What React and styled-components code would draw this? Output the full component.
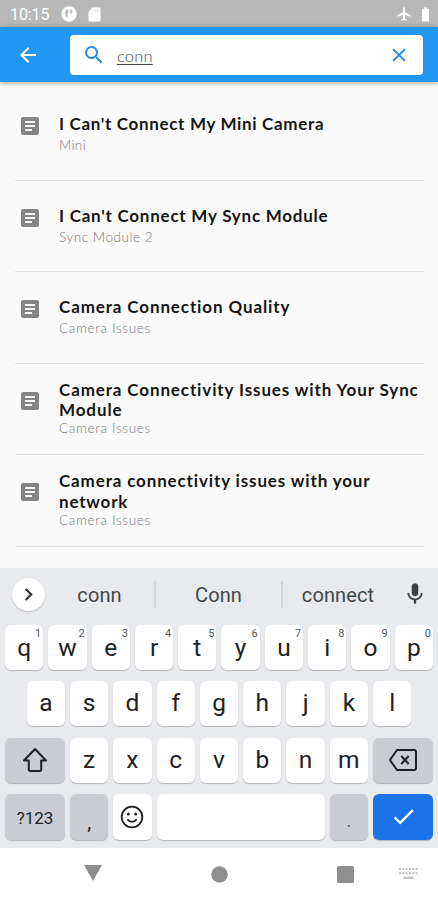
import React from 'react'
import styled, { createGlobalStyle } from 'styled-components'
import {
  MdAirplanemodeActive,
  MdArrowBack,
  MdArticle,
  MdBatteryFull,
  MdCheck,
  MdClose,
  MdKeyboardArrowRight,
  MdMic,
  MdSearch,
} from 'react-icons/md'

const GlobalStyle = createGlobalStyle`
  * {
    box-sizing: border-box;
  }
  body {
    margin: 0;
    background-color: #fff;
  }
`

const Screen = styled.div`
  display: flex;
  flex-direction: column;
  width: 438px;
  height: 900px;
  overflow: hidden;
  background-color: #fafafa;
  font-family: Roboto, sans-serif;
`

const StatusBar = styled.div`
  display: flex;
  align-items: center;
  flex: none;
  height: 27px;
  padding: 1px 4px 0 10px;
  background-color: #b8b8b8;
  color: #fff;
`

const Clock = styled.span`
  width: 51px;
  font-size: 16px;
  letter-spacing: -0.1px;
`

const StatusIcons = styled.div`
  display: flex;
  align-items: center;
  gap: ${({ gap }) => gap}px;
  margin-left: ${({ end }) => end ? 'auto' : 0};
`

const Header = styled.header`
  display: flex;
  align-items: center;
  flex: none;
  height: 55px;
  padding: 0 15px 0 16px;
  background-color: #2196f3;
  color: #fff;
  box-shadow: 0 1px 5px rgba(0, 0, 0, 0.35);
  z-index: 1;
`

const SearchBox = styled.div`
  display: flex;
  align-items: center;
  flex: 1;
  height: 40px;
  margin-left: 30px;
  padding: 0 13px 0 12px;
  border-radius: 4px;
  background-color: #fff;
  color: #2589e6;
`

const Query = styled.span`
  flex: 1;
  margin-left: 11px;
  padding-top: 2px;
  font-family: Lato, sans-serif;
  font-size: 16.5px;
  font-weight: 300;
  line-height: 20px;
  letter-spacing: 0.2px;
  color: #444;
  text-decoration: underline;
  text-decoration-thickness: 1px;
  text-underline-offset: 2px;
`

const Results = styled.ul`
  flex: 1;
  min-height: 0;
  margin: 0;
  padding: 7px 14px 0 15px;
  list-style: none;
`

const Result = styled.li`
  display: flex;
  height: 91.5px;
  border-bottom: 1.5px solid #e3e3e3;
  color: #858585;
  > svg {
    flex: none;
    margin: 25px 17px 0 3px;
  }
`

const ResultText = styled.div`
  padding-top: ${({ twoLines }) => twoLines ? 16 : 25}px;
  white-space: nowrap;
`

const Title = styled.div`
  font-family: Lato, sans-serif;
  font-size: 17px;
  font-weight: 700;
  line-height: 20.5px;
  letter-spacing: ${({ spacing }) => spacing}px;
  color: #161616;
`

const Category = styled.div`
  margin-top: ${({ twoLines }) => twoLines ? -1.5 : 1.5}px;
  font-family: Lato, sans-serif;
  font-size: 13.5px;
  font-weight: 300;
  line-height: 18px;
  letter-spacing: ${({ spacing }) => spacing}px;
  color: #777;
`

const Keyboard = styled.div`
  display: flex;
  flex-direction: column;
  flex: none;
  height: 280px;
  padding: 0 5px;
  background-color: #e8eaed;
  color: #202124;
`

const Suggestions = styled.div`
  display: flex;
  align-items: center;
  flex: none;
  height: 52px;
  margin-bottom: 5px;
  padding: 0 0 0 7px;
  > svg {
    flex: none;
    margin-left: 9px;
  }
`

const ExpandButton = styled.button`
  display: flex;
  align-items: center;
  justify-content: center;
  flex: none;
  width: 33px;
  height: 33px;
  padding: 0;
  border: none;
  border-radius: 50%;
  background-color: #fff;
  color: #303134;
  box-shadow: 0 1px 2px rgba(0, 0, 0, 0.2);
`

const Suggestion = styled.span`
  flex: none;
  width: ${({ width }) => width}px;
  padding-top: 2px;
  font-size: 20px;
  line-height: 25px;
  letter-spacing: 0.1px;
  text-align: center;
  color: #45474a;
  & + & {
    border-left: 2px solid #d5d7da;
  }
`

const KeyRow = styled.div`
  display: flex;
  flex: none;
  gap: 5px;
  height: ${({ height }) => height || 45}px;
  margin-bottom: 11.3px;
  padding: 0 ${({ inset }) => inset || 0}px;
`

const keyColors = {
  letter: '#fff',
  special: '#cbcdd2',
  action: '#1a73e8',
}

const Key = styled.button`
  position: relative;
  display: flex;
  align-items: center;
  justify-content: center;
  flex: ${({ width }) => width ? `0 0 ${width}px` : '1 1 0'};
  min-width: 0;
  padding: ${({ drop }) => drop || 0}px 0 ${({ lift }) => lift || 0}px;
  border: none;
  border-radius: 6px;
  background-color: ${({ kind }) => keyColors[kind || 'letter']};
  box-shadow: 0 1px 1px rgba(0, 0, 0, 0.22);
  font-family: Roboto, sans-serif;
  font-size: ${({ size }) => size || 24.5}px;
  color: ${({ kind, faded }) => kind === 'action' ? '#fff' : faded ? '#6b6d70' : '#202124'};
`

const Hint = styled.span`
  position: absolute;
  top: 3px;
  right: 2px;
  font-size: 11px;
  line-height: 12px;
  color: #55575a;
`

const NavBar = styled.nav`
  display: flex;
  align-items: center;
  flex: none;
  height: 52px;
  padding: 0 20px 0 84px;
  background-color: #fff;
  color: #8e8e8e;
  svg:nth-child(1) {
    margin-top: -3px;
  }
  svg:nth-child(2) {
    margin-left: 109px;
  }
  svg:nth-child(3) {
    margin-left: 109px;
  }
  svg:nth-child(4) {
    margin-left: auto;
  }
`

const results = [
  { title: ["I Can't Connect My Mini Camera"], category: 'Mini', spacing: [0.67], categorySpacing: 0.35 },
  { title: ["I Can't Connect My Sync Module"], category: 'Sync Module 2', spacing: [0.76], categorySpacing: 0.55 },
  { title: ['Camera Connection Quality'], category: 'Camera Issues', spacing: [0.88], categorySpacing: 0.65 },
  { title: ['Camera Connectivity Issues with Your Sync', 'Module'], category: 'Camera Issues', spacing: [0.88, 0.9], categorySpacing: 0.65 },
  { title: ['Camera connectivity issues with your', 'network'], category: 'Camera Issues', spacing: [0.86, 0.8], categorySpacing: 0.65 },
]

const ShiftIcon = () => (
  <svg width="26" height="26" viewBox="0 0 26 26" fill="none" stroke="currentColor" strokeWidth="2" strokeLinejoin="round">
    <path d="M13 2 L24 13.5 H19.2 V22.5 Q19.2 24 17.7 24 H8.3 Q6.8 24 6.8 22.5 V13.5 H2 Z" />
  </svg>
)

const BackspaceIcon = () => (
  <svg width="30" height="24" viewBox="0 0 30 24" fill="none" stroke="currentColor" strokeWidth="2">
    <path d="M9 2 H26 Q28 2 28 4 V20 Q28 22 26 22 H9 L2 12 Z" strokeLinejoin="round" />
    <path d="M13.3 8 L20.7 16 M20.7 8 L13.3 16" />
  </svg>
)

const SmileIcon = () => (
  <svg width="24" height="24" viewBox="0 0 24 24" fill="none" stroke="currentColor" strokeWidth="1.8">
    <circle cx="12" cy="12" r="10.3" />
    <path d="M7.3 14.3 Q12 19.3 16.7 14.3" />
    <circle cx="8.3" cy="9" r="1.5" fill="currentColor" stroke="none" />
    <circle cx="15.7" cy="9" r="1.5" fill="currentColor" stroke="none" />
  </svg>
)

const App = () => (
  <Screen>
    <GlobalStyle />
    <StatusBar>
      <Clock>10:15</Clock>
      <StatusIcons gap={11}>
        <svg width="16" height="16" viewBox="0 0 16 16">
          <circle cx="8" cy="8" r="7.7" fill="#fff" />
          <path d="M7.5 3.6 H5.4 Q3.4 6 4.3 9.5 L6.5 12.2 V7 H7.5 Z" fill="#b8b8b8" />
          <path d="M9.2 3.6 H11 Q12 5.5 11 7.4 H9.2 Z" fill="#b8b8b8" />
        </svg>
        <svg width="13" height="15" viewBox="0 0 13 15" fill="#fff">
          <path d="M4.5 0.5 H11 Q12.5 0.5 12.5 2 V13 Q12.5 14.5 11 14.5 H2 Q0.5 14.5 0.5 13 V5 Z" />
          <path d="M5 2.5 V4.5 M7.3 2.5 V4.5 M9.6 2.5 V4.5" stroke="#dcdcdc" />
        </svg>
      </StatusIcons>
      <StatusIcons gap={5} end>
        <MdAirplanemodeActive size={16} />
        <MdBatteryFull size={17} />
      </StatusIcons>
    </StatusBar>
    <Header>
      <MdArrowBack size={24} />
      <SearchBox>
        <MdSearch size={24} />
        <Query>conn</Query>
        <MdClose size={22} />
      </SearchBox>
    </Header>
    <Results>
      {results.map(({ title, category, spacing, categorySpacing }, i) => {
        const twoLines = title.length > 1
        return (
          <Result key={i}>
            <MdArticle size={24} />
            <ResultText twoLines={twoLines}>
              {title.map((line, n) => <Title key={line} spacing={spacing[n]}>{line}</Title>)}
              <Category twoLines={twoLines} spacing={categorySpacing}>{category}</Category>
            </ResultText>
          </Result>
        )
      })}
    </Results>
    <Keyboard>
      <Suggestions>
        <ExpandButton><MdKeyboardArrowRight size={25} /></ExpandButton>
        <Suggestion width={109}>conn</Suggestion>
        <Suggestion width={127}>Conn</Suggestion>
        <Suggestion width={112}>connect</Suggestion>
        <MdMic size={26} color="#3c4043" />
      </Suggestions>
      <KeyRow>
        {'qwertyuiop'.split('').map((letter, i) => (
          <Key key={letter}>
            {letter}
            <Hint>{(i + 1) % 10}</Hint>
          </Key>
        ))}
      </KeyRow>
      <KeyRow inset={21.7}>
        {'asdfghjkl'.split('').map(letter => <Key key={letter} lift={2}>{letter}</Key>)}
      </KeyRow>
      <KeyRow>
        <Key kind="special" width={60}><ShiftIcon /></Key>
        {'zxcvbnm'.split('').map(letter => <Key key={letter} lift={1}>{letter}</Key>)}
        <Key kind="special" width={60}><BackspaceIcon /></Key>
      </KeyRow>
      <KeyRow height={46}>
        <Key kind="special" width={60} size={17} drop={2}>?123</Key>
        <Key kind="special" width={38.3} size={20} drop={10}>,</Key>
        <Key width={38.3}><SmileIcon /></Key>
        <Key />
        <Key kind="special" width={38.3} size={20} drop={7} faded>.</Key>
        <Key kind="action" width={60}><MdCheck size={27} /></Key>
      </KeyRow>
    </Keyboard>
    <NavBar>
      <svg width="18" height="16" viewBox="0 0 18 16" fill="currentColor">
        <path d="M0 0 H18 L9 16 Z" />
      </svg>
      <svg width="17" height="17" viewBox="0 0 17 17" fill="currentColor">
        <circle cx="8.5" cy="8.5" r="8.3" />
      </svg>
      <svg width="17" height="17" viewBox="0 0 17 17" fill="currentColor">
        <rect width="17" height="17" rx="1.5" />
      </svg>
      <svg width="19" height="12" viewBox="0 0 19 12" fill="#c4c4c4">
        {[0, 3.3, 6.6, 9.9, 13.2, 16.5].map(x => (
          <React.Fragment key={x}>
            <rect x={x} y="0" width="2" height="2" />
            <rect x={x} y="4.3" width="2" height="2" />
          </React.Fragment>
        ))}
        <rect x="4.5" y="8.6" width="10" height="2.4" />
      </svg>
    </NavBar>
  </Screen>
)

export default App
